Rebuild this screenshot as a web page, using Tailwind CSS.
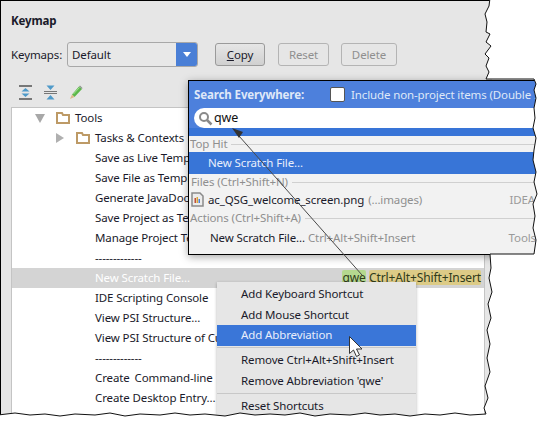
<!DOCTYPE html>
<html lang="en">
<head>
  <meta charset="UTF-8" />
  <title>Keymap</title>
  <script src="https://cdn.jsdelivr.net/npm/@tailwindcss/browser@4"></script>
</head>
<body class="bg-white font-['Noto_Sans',sans-serif] text-[11.5px] tracking-[-0.12px] text-[#1a1a2a] overflow-hidden">
  <div class="relative w-[542px] h-[421px] overflow-hidden">
    <!-- settings panel -->
    <div class="w-[492px] h-[416px] bg-[#e6e6e6] border-t border-l border-black pl-[10px] flex flex-col">
      <div class="h-[39px] pt-[11px] font-bold text-[11.5px]">Keymap</div>
      <div class="flex items-center h-[25px] mt-[2px]">
        <span class="w-[56px]">Keymaps:</span>
        <div class="flex w-[131px] h-[25px] border border-[#a8a8a8] rounded-[3px] bg-[#e8e8e8] items-center pl-[4px] overflow-hidden">
          <span class="flex-1">Default</span>
          <div class="w-[21px] h-[25px] bg-[#4a7fd6] flex items-center justify-center">
            <div class="w-0 h-0 border-l-[4px] border-r-[4px] border-t-[5px] border-l-transparent border-r-transparent border-t-white"></div>
          </div>
        </div>
        <button class="ml-[17px] w-[50px] h-[23px] border border-[#9a9a9a] rounded-[3px] bg-linear-to-b from-[#e6e6e6] to-[#d0d0d0]"><u>C</u>opy</button>
        <button class="ml-[13px] w-[51px] h-[23px] border border-[#b4b4b4] rounded-[3px] text-[#8f8f8f]">Reset</button>
        <button class="ml-[12px] w-[56px] h-[23px] border border-[#b4b4b4] rounded-[3px] text-[#8f8f8f]">Delete</button>
      </div>
      <div class="flex items-center h-[40px] pt-[10px] gap-[12px] pl-[8px]">
        <svg width="13" height="15" viewBox="0 0 13 15">
          <path d="M0 0h13v2H0zM0 13h13v2H0z" fill="#777"/>
          <path d="M6.500 3l4 3.500h-8zM6.500 12l4-3.500h-8z" fill="#4f9ac9"/>
        </svg>
        <svg width="13" height="15" viewBox="0 0 13 15">
          <path d="M0 6h13v1H0zM0 8h13v1H0z" fill="#777"/>
          <path d="M6.500 5l4-4.500h-8zM6.500 10l4 4.500h-8z" fill="#4f9ac9"/>
        </svg>
        <svg width="14" height="15" viewBox="0 0 14 15">
          <path d="M3 9.500L10 1.500 13 4 5.500 12z" fill="#5cb84a"/>
          <path d="M3 9.500L5.500 12 1 14z" fill="#dcb98a"/>
          <path d="M10 1.500L11 .5 13.500 3 13 4z" fill="#8a9a8a"/>
          <path d="M4.500 9L10.500 2.500" stroke="#a5e095" stroke-width="1"/>
        </svg>
      </div>
      <!-- tree -->
      <div class="w-[474px] flex-1 bg-white border border-[#c4c4c4] border-b-0">
        <div class="h-[20px] flex items-center pl-[23px]">
          <div class="w-0 h-0 border-l-[5px] border-r-[5px] border-t-[9px] border-l-transparent border-r-transparent border-t-[#a8a8a8]"></div>
          <svg class="ml-[11px]" width="14" height="12" viewBox="0 0 14 12"><path d="M1 11V1h5l1 2h6v8z" fill="none" stroke="#bd9a66" stroke-width="2"/></svg>
          <span class="ml-[5px]">Tools</span>
        </div>
        <div class="h-[20px] flex items-center pl-[44px]">
          <div class="w-0 h-0 border-t-[5px] border-b-[5px] border-l-[8px] border-t-transparent border-b-transparent border-l-[#b0b0b0]"></div>
          <svg class="ml-[12px]" width="14" height="12" viewBox="0 0 14 12"><path d="M1 11V1h5l1 2h6v8z" fill="none" stroke="#bd9a66" stroke-width="2"/></svg>
          <span class="ml-[5px]">Tasks &amp; Contexts</span>
        </div>
        <div class="h-[20px] flex items-center pl-[83px]">Save as Live Template...</div>
        <div class="h-[20px] flex items-center pl-[83px]">Save File as Template...</div>
        <div class="h-[20px] flex items-center pl-[83px]">Generate JavaDoc...</div>
        <div class="h-[20px] flex items-center pl-[83px]">Save Project as Template...</div>
        <div class="h-[20px] flex items-center pl-[83px]">Manage Project Templates...</div>
        <div class="h-[20px] flex items-center pl-[83px]">-------------</div>
        <div class="h-[20px] flex items-center pl-[83px] bg-[#d4d4d4] text-white justify-between pr-[3px]">
          <span>New Scratch File...</span>
          <span class="flex items-center gap-[3px] text-[#2f3a1a] -mt-px text-[12px]">
            <span class="w-[24px] text-center bg-[#b5d88f] rounded-[2px] h-[15px] leading-[15px]">qwe</span>
            <span class="w-[112px] text-center whitespace-nowrap bg-[#dccb86] rounded-[2px] h-[15px] leading-[15px]">Ctrl+Alt+Shift+Insert</span>
          </span>
        </div>
        <div class="h-[20px] flex items-center pl-[83px]">IDE Scripting Console</div>
        <div class="h-[20px] flex items-center pl-[83px]">View PSI Structure...</div>
        <div class="h-[20px] flex items-center pl-[83px]">View PSI Structure of Current File...</div>
        <div class="h-[20px] flex items-center pl-[83px]">-------------</div>
        <div class="h-[20px] flex items-center pl-[83px] [word-spacing:2px]">Create Command-line Launcher...</div>
        <div class="h-[20px] flex items-center pl-[83px]">Create Desktop Entry...</div>
      </div>
    </div>

    <!-- search everywhere popup -->
    <div class="absolute left-[188px] top-[80px] w-[350px] h-[175px] bg-[#f2f2f2] border border-black shadow-[0_2px_8px_rgba(0,0,0,0.35)] flex flex-col">
      <div class="h-[27px] bg-[#4d80dc] flex items-center pl-[5px] text-[#dfe8f8] whitespace-nowrap">
        <span class="font-bold">Search Everywhere:</span>
        <span class="ml-[26px] shrink-0 w-[15px] h-[15px] bg-white border border-[#555] rounded-[2px]"></span>
        <span class="ml-[6px]">Include non-project items (Double Shift)</span>
      </div>
      <div class="bg-[#4d80dc] pl-[5px]">
        <div class="h-[20px] bg-white rounded-l-[10px] flex items-center pl-[4px] text-[#111] text-[12.5px]">
          <svg class="shrink-0" width="15" height="15" viewBox="0 0 15 15"><circle cx="6" cy="6" r="4" fill="none" stroke="#8a8a8a" stroke-width="2"/><path d="M9 9l4.500 4.500" stroke="#8a8a8a" stroke-width="2.500"/></svg>
          <span class="ml-[1px]">qwe</span>
        </div>
      </div>
      <div class="h-[8px] bg-[#3874d7]"></div>
      <div class="h-[16px] flex items-center pl-[1px] text-[#8f8f8f] gap-[4px]"><span>Top Hit</span><div class="flex-1 h-px bg-[#d0d0d0]"></div></div>
      <div class="h-[22px] bg-[#3875d7] text-[#e8eefb] flex items-center pl-[19px]">New Scratch File...</div>
      <div class="h-[16px] flex items-center pl-[2px] text-[#8f8f8f] gap-[4px]"><span>Files (Ctrl+Shift+N)</span><div class="flex-1 h-px bg-[#d0d0d0]"></div></div>
      <div class="h-[19px] flex items-center pl-[2px] whitespace-nowrap">
        <svg class="shrink-0" width="13" height="15" viewBox="0 0 13 15"><path d="M1 1h8l3 3v10H1z" fill="#ececec" stroke="#8a8a8a" stroke-width="1.500"/><path d="M3.500 6h1.500v5H3.500z" fill="#c0503a"/><path d="M5.500 5h1.500v6H5.500z" fill="#d9a53a"/><path d="M7.500 7h1.500v4H7.500z" fill="#4a7fd6"/></svg>
        <span class="ml-[4px]">ac_QSG_welcome_screen.png</span>
        <span class="ml-[4px] text-[#8f8f8f]">(...images)</span>
        <span class="ml-auto pr-[2px] text-[#9a9a9a]">IDEA</span>
      </div>
      <div class="h-[18px] flex items-center pl-[1px] text-[#8f8f8f] gap-[4px]"><span>Actions (Ctrl+Shift+A)</span><div class="flex-1 h-px bg-[#d0d0d0]"></div></div>
      <div class="h-[22px] flex items-center pl-[21px] whitespace-nowrap">
        <span>New Scratch File...</span>
        <span class="ml-[3px] text-[#8f8f8f]">Ctrl+Alt+Shift+Insert</span>
        <span class="ml-auto pr-[1px] text-[#9a9a9a]">Tools</span>
      </div>
    </div>

    <!-- context menu -->
    <div class="absolute left-[217px] top-[282px] w-[199px] h-[134px] bg-[#e6e6e6] shadow-[0_1px_3px_rgba(0,0,0,0.3)] pt-[1px] flex flex-col">
      <div class="h-[21px] flex items-center pl-[24px]">Add Keyboard Shortcut</div>
      <div class="h-[21px] flex items-center pl-[24px]">Add Mouse Shortcut</div>
      <div class="h-[21px] flex items-center pl-[24px] bg-[#3a76d8] text-[#e8eefb]">Add Abbreviation</div>
      <div class="h-[4px] flex items-center"><div class="w-full h-px bg-[#c8c8c8]"></div></div>
      <div class="h-[21px] flex items-center pl-[24px]">Remove Ctrl+Alt+Shift+Insert</div>
      <div class="h-[21px] flex items-center pl-[24px]">Remove Abbreviation 'qwe'</div>
      <div class="h-[4px] flex items-center"><div class="w-full h-px bg-[#c8c8c8]"></div></div>
      <div class="h-[21px] flex items-center pl-[24px]">Reset Shortcuts</div>
    </div>

    <!-- arrow, cursor and torn edge on top of everything -->
    <svg class="absolute left-0 top-0" width="542" height="421" viewBox="0 0 542 421">
      <path d="M239 136L362 275" stroke="#4a4a4a" stroke-width="1" fill="none"/>
      <path d="M232 128l11 4-4 6z" fill="#333"/>
      <path d="M349.500 336.500v17l4-3.500 3 6.500 3-1.500-3-6h5.500z" fill="#fff" stroke="#333" stroke-width="1"/>
      <path d="M490 -2L489 6 485 14 487 22 486 32 490 34 486 42 491 46 485 54 489 58 486 66 489 72 486 79 534 79 536 84 534 90 536 98 534 108 535 118 533 128 536 138 534 150 533 160 536 172 534 182 537 194 533 204 535 216 533 228 536 240 534 254 490 254 491 268 489 278 492 292 488 304 491 318 487 330 490 344 487 358 490 372 485 386 488 398 484 408 486 414 470 415 455 413 440 415 425 414 410 416 395 414 380 415 365 413 350 415 330 414 315 416 300 413 285 415 270 414 255 415 240 413 225 416 205 414 190 415 175 413 160 415 140 414 125 416 110 413 95 415 75 414 60 416 45 414 30 415 15 413 -2 415 -2 423 544 423 544 -2Z" fill="#fff" stroke="#111" stroke-width="1"/>
    </svg>
  </div>
</body>
</html>
